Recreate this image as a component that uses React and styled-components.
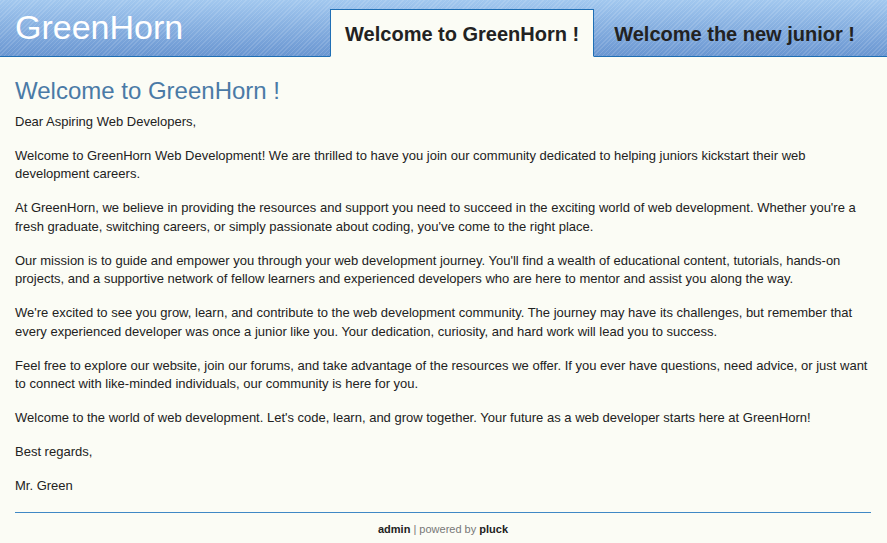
import React from 'react'
import styled, { createGlobalStyle } from 'styled-components'

const Global = createGlobalStyle`
body {
  margin: 0;
  background: #fbfcf5;
  font-family: "Liberation Sans", Arial, sans-serif;
  color: #222;
}
`;

const Header = styled.header`
height: 56px;
display: flex;
align-items: flex-end;
justify-content: space-between;
border-bottom: 1px solid #1f6fb5;
background:
  repeating-linear-gradient(-45deg, rgba(255,255,255,0.13) 0 1px, transparent 1px 3px),
  linear-gradient(#a2c8ef, #6a96d1);
`;

const Logo = styled.div`
align-self: flex-start;
color: #fff;
font-size: 34px;
padding: 8px 0 0 15px;
`;

const Tabs = styled.nav`
display: flex;
align-items: flex-end;
margin-bottom: -1px;
padding-right: 17px;
`;

const Tab = styled.a`
display: block;
height: 44px;
line-height: 44px;
padding: 2px 14px 0;
margin-left: ${p => (p.$first ? '0' : '5px')};
font-size: 20px;
font-weight: bold;
color: #222;
text-decoration: none;
border: 1px solid ${p => (p.$active ? '#1f6fb5' : 'transparent')};
border-bottom: 1px solid ${p => (p.$active ? '#fbfcf5' : 'transparent')};
background: ${p => (p.$active ? '#fbfcf5' : 'transparent')};
`;

const Main = styled.main`
padding: 0 16px 0 15px;
`;

const Title = styled.h1`
margin: 19px 0 7px;
font-size: 24px;
font-weight: normal;
color: #4a7aa6;
line-height: 30px;
`;

const Para = styled.p`
margin: 0 0 15.6px;
font-size: 13px;
line-height: 18.4px;
`;

const Footer = styled.footer`
margin-top: 17px;
border-top: 1px solid #3f88c5;
padding-top: 10px;
text-align: center;
font-size: 11px;
color: #777;
`;

const Strong = styled.b`
color: #222;
`;

const paragraphs = [
  'Dear Aspiring Web Developers,',
  'Welcome to GreenHorn Web Development! We are thrilled to have you join our community dedicated to helping juniors kickstart their web development careers.',
  "At GreenHorn, we believe in providing the resources and support you need to succeed in the exciting world of web development. Whether you're a fresh graduate, switching careers, or simply passionate about coding, you've come to the right place.",
  "Our mission is to guide and empower you through your web development journey. You'll find a wealth of educational content, tutorials, hands-on projects, and a supportive network of fellow learners and experienced developers who are here to mentor and assist you along the way.",
  "We're excited to see you grow, learn, and contribute to the web development community. The journey may have its challenges, but remember that every experienced developer was once a junior like you. Your dedication, curiosity, and hard work will lead you to success.",
  'Feel free to explore our website, join our forums, and take advantage of the resources we offer. If you ever have questions, need advice, or just want to connect with like-minded individuals, our community is here for you.',
  "Welcome to the world of web development. Let's code, learn, and grow together. Your future as a web developer starts here at GreenHorn!",
  'Best regards,',
  'Mr. Green',
];

const App = () => {
  return (
    <>
      <Global />
      <Header>
        <Logo>GreenHorn</Logo>
        <Tabs>
          <Tab $active $first href="#">Welcome to GreenHorn !</Tab>
          <Tab href="#">Welcome the new junior !</Tab>
        </Tabs>
      </Header>
      <Main>
        <Title>Welcome to GreenHorn !</Title>
        {paragraphs.map((t, i) => (
          <Para key={i}>{t}</Para>
        ))}
        <Footer>
          <Strong>admin</Strong> | powered by <Strong>pluck</Strong>
        </Footer>
      </Main>
    </>
  )
}

export default App
